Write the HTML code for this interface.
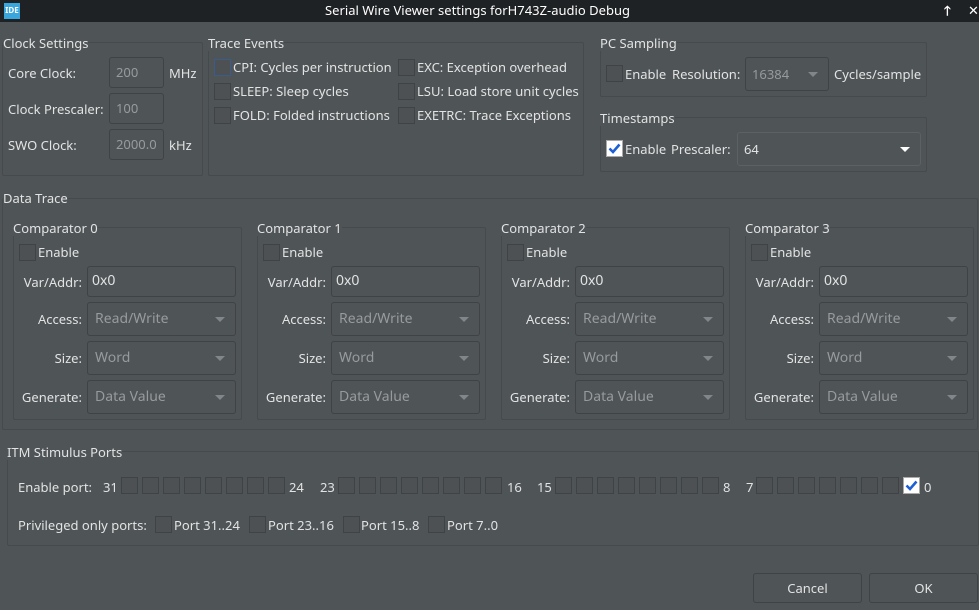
<!DOCTYPE html>
<html><head><meta charset="utf-8"><style>
*{box-sizing:border-box;margin:0;padding:0}
body{width:979px;height:610px;background:#4f5457;font-family:"Noto Sans","Liberation Sans","DejaVu Sans",sans-serif;font-size:13px;color:#e3e3e3;position:relative;overflow:hidden}
.a{position:absolute;white-space:nowrap;line-height:16px}
.tb{position:absolute;left:0;top:0;width:979px;height:22px;background:#1f2224}
.box{position:absolute;border:1px solid #464a4d;border-radius:2px}
.in{position:absolute;border:1px solid #3f4346;border-radius:3px;background:#4f5457;padding-left:6px;line-height:28px;color:#e3e3e3}
.c .in{font-size:14px}
.c .le{padding-left:4px}
.c .dis{padding-left:7px}
.dis{color:#989b9d}
.cb{position:absolute;width:17px;height:17px;border:1px solid #3f4346;background:#4d5154}
.chk{position:absolute;width:17px;height:17px;background:#fff;border:1px solid #aaa}
.arr{position:absolute;right:10px;top:50%;margin-top:-2px;width:0;height:0;border-left:5px solid transparent;border-right:5px solid transparent;border-top:5px solid #80868a}
.btn{position:absolute;border:1px solid #3f4346;border-radius:3px;text-align:center;line-height:28px;background:#4f5457}
.r{text-align:right}
</style></head><body>
<div class="tb"></div>
<div class="a" style="left:4px;top:3px;width:16px;height:16px;background:#3aa6de;color:#fff;font-size:8px;font-weight:bold;line-height:16px;text-align:center">IDE</div>
<div class="a" style="left:325px;top:2px;color:#fff;font-size:13px">Serial Wire Viewer settings forH743Z-audio Debug</div>
<div class="a" style="left:944px;top:2px;color:#fff;font-weight:bold">🡑</div>
<div class="a" style="left:968px;top:2px;color:#fff;font-weight:bold">✕</div>

<div class="box" style="left:2px;top:42px;width:201px;height:134px"></div>
<div class="a" style="left:3px;top:35px;background:#4f5457">Clock Settings</div>
<div class="a" style="left:8px;top:65px">Core Clock:</div>
<div class="in dis" style="left:109px;top:57px;width:55px;height:31px">200</div>
<div class="a" style="left:169px;top:65px">MHz</div>
<div class="a" style="left:8px;top:101px">Clock Prescaler:</div>
<div class="in dis" style="left:109px;top:93px;width:55px;height:31px">100</div>
<div class="a" style="left:8px;top:137px">SWO Clock:</div>
<div class="in dis" style="left:109px;top:129px;width:55px;height:31px">2000.0</div>
<div class="a" style="left:169px;top:137px">kHz</div>

<div class="box" style="left:208px;top:42px;width:376px;height:134px"></div>
<div class="a" style="left:208px;top:35px;background:#4f5457">Trace Events</div>
<div class="cb" style="left:214px;top:59px;border-color:#3b5c8a"></div><div class="a" style="left:233px;top:59px">CPI: Cycles per instruction</div>
<div class="cb" style="left:214px;top:83px"></div><div class="a" style="left:233px;top:83px">SLEEP: Sleep cycles</div>
<div class="cb" style="left:214px;top:107px"></div><div class="a" style="left:233px;top:107px">FOLD: Folded instructions</div>
<div class="cb" style="left:398px;top:59px"></div><div class="a" style="left:417px;top:59px">EXC: Exception overhead</div>
<div class="cb" style="left:398px;top:83px"></div><div class="a" style="left:417px;top:83px">LSU: Load store unit cycles</div>
<div class="cb" style="left:398px;top:107px"></div><div class="a" style="left:417px;top:107px">EXETRC: Trace Exceptions</div>

<div class="box" style="left:600px;top:42px;width:327px;height:55px"></div>
<div class="a" style="left:600px;top:35px;background:#4f5457">PC Sampling</div>
<div class="cb" style="left:606px;top:65px"></div>
<div class="a" style="left:625px;top:66px">Enable</div>
<div class="a" style="left:672px;top:66px">Resolution:</div>
<div class="in dis" style="left:745px;top:57px;width:84px;height:34px;line-height:32px">16384<div class="arr"></div></div>
<div class="a" style="left:834px;top:66px">Cycles/sample</div>

<div class="box" style="left:600px;top:117px;width:327px;height:55px"></div>
<div class="a" style="left:600px;top:110px;background:#4f5457">Timestamps</div>
<div class="chk" style="left:606px;top:140px"><svg width="15" height="15" viewBox="0 0 15 15"><path d="M2.5 7.5 L6 11 L12.5 3.5" stroke="#1d5fd6" stroke-width="2.6" fill="none"/></svg></div>
<div class="a" style="left:625px;top:141px">Enable</div>
<div class="a" style="left:671px;top:141px">Prescaler:</div>
<div class="in" style="left:737px;top:132px;width:184px;height:34px;line-height:32px;border-color:#5c6164">64<div class="arr" style="border-top-color:#fff"></div></div>

<div class="box" style="left:2px;top:198px;width:976px;height:232px"></div>
<div class="a" style="left:3px;top:190px;background:#4f5457">Data Trace</div>

<div class="box" style="left:7px;top:451px;width:972px;height:95px"></div>
<div class="a" style="left:7px;top:444px;background:#4f5457">ITM Stimulus Ports</div>
<div class="a" style="left:18px;top:479px">Enable port:</div>
<div class="a" style="left:18px;top:517px">Privileged only ports:</div>
<div class="cb" style="left:155px;top:516px"></div><div class="a" style="left:174px;top:517px">Port 31..24</div>
<div class="cb" style="left:249px;top:516px"></div><div class="a" style="left:268px;top:517px">Port 23..16</div>
<div class="cb" style="left:343px;top:516px"></div><div class="a" style="left:361px;top:517px">Port 15..8</div>
<div class="cb" style="left:428px;top:516px"></div><div class="a" style="left:447px;top:517px">Port 7..0</div>

<div class="btn" style="left:753px;top:573px;width:109px;height:30px">Cancel</div>
<div class="btn" style="left:869px;top:573px;width:109px;height:30px">OK</div>

<div class="c">
<div class="box" style="left:13px;top:227px;width:229px;height:193px"></div><div class="a" style="left:13px;top:220px;background:#4f5457">Comparator 0</div>
<div class="cb" style="left:19px;top:244px"></div><div class="a" style="left:38px;top:244px">Enable</div>
<div class="a r" style="left:0px;width:82px;top:274px">Var/Addr:</div><div class="in le" style="left:87px;top:266px;width:149px;height:31px">0x0</div>
<div class="a r" style="left:0px;width:82px;top:311px">Access:</div><div class="in dis" style="left:87px;top:302px;width:149px;height:34px;line-height:32px">Read/Write<div class="arr"></div></div>
<div class="a r" style="left:0px;width:82px;top:350px">Size:</div><div class="in dis" style="left:87px;top:341px;width:149px;height:34px;line-height:32px">Word<div class="arr"></div></div>
<div class="a r" style="left:0px;width:82px;top:389px">Generate:</div><div class="in dis" style="left:87px;top:380px;width:149px;height:34px;line-height:32px">Data Value<div class="arr"></div></div>

<div class="box" style="left:257px;top:227px;width:229px;height:193px"></div><div class="a" style="left:257px;top:220px;background:#4f5457">Comparator 1</div>
<div class="cb" style="left:263px;top:244px"></div><div class="a" style="left:282px;top:244px">Enable</div>
<div class="a r" style="left:244px;width:82px;top:274px">Var/Addr:</div><div class="in le" style="left:331px;top:266px;width:149px;height:31px">0x0</div>
<div class="a r" style="left:244px;width:82px;top:311px">Access:</div><div class="in dis" style="left:331px;top:302px;width:149px;height:34px;line-height:32px">Read/Write<div class="arr"></div></div>
<div class="a r" style="left:244px;width:82px;top:350px">Size:</div><div class="in dis" style="left:331px;top:341px;width:149px;height:34px;line-height:32px">Word<div class="arr"></div></div>
<div class="a r" style="left:244px;width:82px;top:389px">Generate:</div><div class="in dis" style="left:331px;top:380px;width:149px;height:34px;line-height:32px">Data Value<div class="arr"></div></div>

<div class="box" style="left:501px;top:227px;width:229px;height:193px"></div><div class="a" style="left:501px;top:220px;background:#4f5457">Comparator 2</div>
<div class="cb" style="left:507px;top:244px"></div><div class="a" style="left:526px;top:244px">Enable</div>
<div class="a r" style="left:488px;width:82px;top:274px">Var/Addr:</div><div class="in le" style="left:575px;top:266px;width:149px;height:31px">0x0</div>
<div class="a r" style="left:488px;width:82px;top:311px">Access:</div><div class="in dis" style="left:575px;top:302px;width:149px;height:34px;line-height:32px">Read/Write<div class="arr"></div></div>
<div class="a r" style="left:488px;width:82px;top:350px">Size:</div><div class="in dis" style="left:575px;top:341px;width:149px;height:34px;line-height:32px">Word<div class="arr"></div></div>
<div class="a r" style="left:488px;width:82px;top:389px">Generate:</div><div class="in dis" style="left:575px;top:380px;width:149px;height:34px;line-height:32px">Data Value<div class="arr"></div></div>

<div class="box" style="left:745px;top:227px;width:229px;height:193px"></div><div class="a" style="left:745px;top:220px;background:#4f5457">Comparator 3</div>
<div class="cb" style="left:751px;top:244px"></div><div class="a" style="left:770px;top:244px">Enable</div>
<div class="a r" style="left:732px;width:82px;top:274px">Var/Addr:</div><div class="in le" style="left:819px;top:266px;width:149px;height:31px">0x0</div>
<div class="a r" style="left:732px;width:82px;top:311px">Access:</div><div class="in dis" style="left:819px;top:302px;width:149px;height:34px;line-height:32px">Read/Write<div class="arr"></div></div>
<div class="a r" style="left:732px;width:82px;top:350px">Size:</div><div class="in dis" style="left:819px;top:341px;width:149px;height:34px;line-height:32px">Word<div class="arr"></div></div>
<div class="a r" style="left:732px;width:82px;top:389px">Generate:</div><div class="in dis" style="left:819px;top:380px;width:149px;height:34px;line-height:32px">Data Value<div class="arr"></div></div>
</div>

<div class="a" style="left:103px;top:479px">31</div>
<div class="cb" style="left:121px;top:477px"></div><div class="cb" style="left:142px;top:477px"></div><div class="cb" style="left:163px;top:477px"></div><div class="cb" style="left:184px;top:477px"></div><div class="cb" style="left:205px;top:477px"></div><div class="cb" style="left:226px;top:477px"></div><div class="cb" style="left:247px;top:477px"></div><div class="cb" style="left:268px;top:477px"></div>
<div class="a" style="left:289px;top:479px">24</div>
<div class="a" style="left:320px;top:479px">23</div>
<div class="cb" style="left:338px;top:477px"></div><div class="cb" style="left:359px;top:477px"></div><div class="cb" style="left:380px;top:477px"></div><div class="cb" style="left:401px;top:477px"></div><div class="cb" style="left:422px;top:477px"></div><div class="cb" style="left:443px;top:477px"></div><div class="cb" style="left:464px;top:477px"></div><div class="cb" style="left:485px;top:477px"></div>
<div class="a" style="left:507px;top:479px">16</div>
<div class="a" style="left:537px;top:479px">15</div>
<div class="cb" style="left:555px;top:477px"></div><div class="cb" style="left:576px;top:477px"></div><div class="cb" style="left:597px;top:477px"></div><div class="cb" style="left:618px;top:477px"></div><div class="cb" style="left:639px;top:477px"></div><div class="cb" style="left:660px;top:477px"></div><div class="cb" style="left:681px;top:477px"></div><div class="cb" style="left:702px;top:477px"></div>
<div class="a" style="left:723px;top:479px">8</div>
<div class="a" style="left:746px;top:479px">7</div>
<div class="cb" style="left:756px;top:477px"></div><div class="cb" style="left:777px;top:477px"></div><div class="cb" style="left:798px;top:477px"></div><div class="cb" style="left:819px;top:477px"></div><div class="cb" style="left:840px;top:477px"></div><div class="cb" style="left:861px;top:477px"></div><div class="cb" style="left:882px;top:477px"></div>
<div class="chk" style="left:903px;top:477px"><svg width="15" height="15" viewBox="0 0 15 15"><path d="M2.5 7.5 L6 11 L12.5 3.5" stroke="#1d5fd6" stroke-width="2.6" fill="none"/></svg></div>
<div class="a" style="left:924px;top:479px">0</div>
</body></html>
